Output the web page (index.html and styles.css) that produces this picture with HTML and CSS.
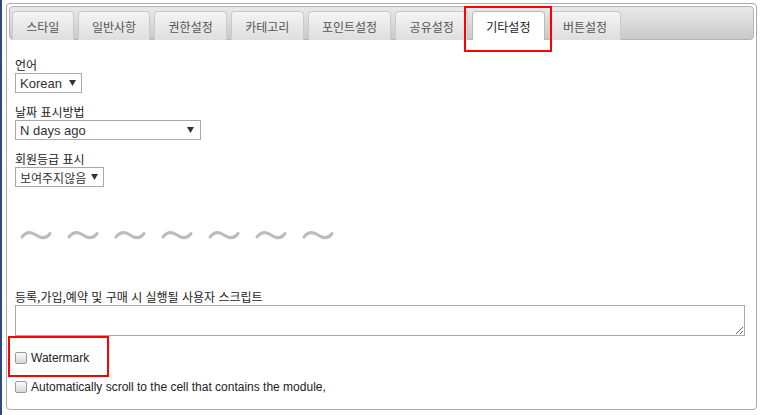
FILE: index.html
```html
<!DOCTYPE html>
<html lang="ko">
<head>
  <meta charset="UTF-8" />
  <title>기타설정</title>
  <link rel="stylesheet" href="styles.css">
</head>
<body>

  <div class="page">
    <div class="stripe"></div>

    <div class="panel">
      <div class="tabs">
        <div class="tab">스타일</div>
        <div class="tab">일반사항</div>
        <div class="tab">권한설정</div>
        <div class="tab">카테고리</div>
        <div class="tab">포인트설정</div>
        <div class="tab">공유설정</div>
        <div class="tab active marked">기타설정</div>
        <div class="tab">버튼설정</div>
      </div>

      <div class="content">
        <div class="field">
          <div class="label">언어</div>
          <div class="select">
            <span>Korean</span>
            <svg class="arrow" width="7" height="6" viewBox="0 0 7 6"><polygon points="0,0 7,0 3.5,6" /></svg>
          </div>
        </div>

        <div class="field">
          <div class="label">날짜 표시방법</div>
          <div class="select wide">
            <span>N days ago</span>
            <svg class="arrow" width="7" height="6" viewBox="0 0 7 6"><polygon points="0,0 7,0 3.5,6" /></svg>
          </div>
        </div>

        <div class="field">
          <div class="label">회원등급 표시</div>
          <div class="select ko">
            <span>보여주지않음</span>
            <svg class="arrow" width="7" height="6" viewBox="0 0 7 6"><polygon points="0,0 7,0 3.5,6" /></svg>
          </div>
        </div>

        <!-- cut marks: part of the page is skipped here -->
        <svg class="tildes" width="320" height="12" viewBox="0 0 320 12">
          <defs>
            <path id="tilde" d="M2 7 C6 2, 11 1.5, 16 5 S26 9, 30 3.5" />
          </defs>
          <g fill="none" stroke="#bcbcbc" stroke-width="3" stroke-linecap="round">
            <use href="#tilde" x="0" />
            <use href="#tilde" x="47" />
            <use href="#tilde" x="94" />
            <use href="#tilde" x="141" />
            <use href="#tilde" x="188" />
            <use href="#tilde" x="235" />
            <use href="#tilde" x="282" />
          </g>
        </svg>

        <div class="label">등록,가입,예약 및 구매 시 실행될 사용자 스크립트</div>
        <textarea class="script"></textarea>

        <label class="check marked">
          <span class="box"></span>
          <span>Watermark</span>
        </label>
        <label class="check">
          <span class="box"></span>
          <span>Automatically scroll to the cell that contains the module,</span>
        </label>
      </div>
    </div>
  </div>

</body>
</html>
```

FILE: styles.css
```css
body {
  margin: 0;
  background: #fff;
  color: #222;
  font-family: "Liberation Sans", Arial, "Noto Sans CJK KR", sans-serif;
  font-size: 12px;
}

.page {
  display: flex;
  height: 415px;
}

.stripe {
  width: 2px;
  background: #2e4a76;
}

.panel {
  flex: 1;
  margin: 3px 3px 0 4px;
  align-self: flex-start;
  border: 1px solid #aaa;
  border-radius: 4px;
  padding: 2px;
}

.tabs {
  display: flex;
  align-items: flex-end;
  height: 32px;
  padding: 0 2px;
  border: 1px solid #b4b4b4;
  border-radius: 4px;
  background: linear-gradient(#e9e9e9, #c9c9c9);
}

.tab {
  position: relative;
  height: 29px;
  box-sizing: border-box;
  margin: 0 4px -1px 0;
  padding: 0 13.25px;
  display: flex;
  align-items: center;
  border: 1px solid #cacaca;
  border-bottom: none;
  border-radius: 4px 4px 0 0;
  background: linear-gradient(#f4f4f4, #dedede);
  color: #555;
  font-family: "Noto Sans CJK KR", sans-serif;
  font-size: 12px;
}

.tab.active {
  background: #fff;
  border-color: #bbb;
  color: #222;
}

/* red annotation boxes */
.marked {
  position: relative;
}

.tab.marked::after {
  content: "";
  position: absolute;
  top: -6px;
  left: -9px;
  right: -8px;
  bottom: -12px;
  border: 2px solid #f00;
  z-index: 2;
}

.check.marked::after {
  content: "";
  position: absolute;
  top: -14px;
  left: -7px;
  width: 97px;
  bottom: -11px;
  border: 2px solid #f00;
}

.content {
  padding: 17px 9px 12px 6px;
}

.field {
  margin-bottom: 11px;
}

.label {
  height: 16px;
  line-height: 16px;
  font-family: "Noto Sans CJK KR", sans-serif;
  font-size: 12px;
  color: #222;
}

.select {
  display: inline-flex;
  align-items: center;
  gap: 7px;
  height: 20px;
  box-sizing: border-box;
  padding: 0 5px 0 4px;
  border: 1px solid #a9a9a9;
  font-size: 13px;
  color: #333;
}

.select.wide {
  width: 186px;
  justify-content: space-between;
  padding-right: 6px;
}

.select.ko {
  gap: 5px;
  font-family: "Noto Sans CJK KR", sans-serif;
  font-size: 12px;
}

.arrow {
  fill: #333;
}

.tildes {
  display: block;
  margin: 43px 0 47px 5px;
}

.script {
  display: block;
  width: 100%;
  height: 31px;
  box-sizing: border-box;
  margin: 0;
  border: 1px solid #a9a9a9;
  resize: vertical;
}

.check {
  display: flex;
  align-items: center;
  gap: 4px;
  height: 16px;
  color: #222;
}

.check:first-of-type {
  margin-top: 14px;
}

.check + .check {
  margin-top: 13px;
}

.box {
  width: 12px;
  height: 12px;
  box-sizing: border-box;
  border: 1px solid #9a9a9a;
  border-radius: 2px;
  background: linear-gradient(#fbfbfb, #d8d8d8);
}
```
